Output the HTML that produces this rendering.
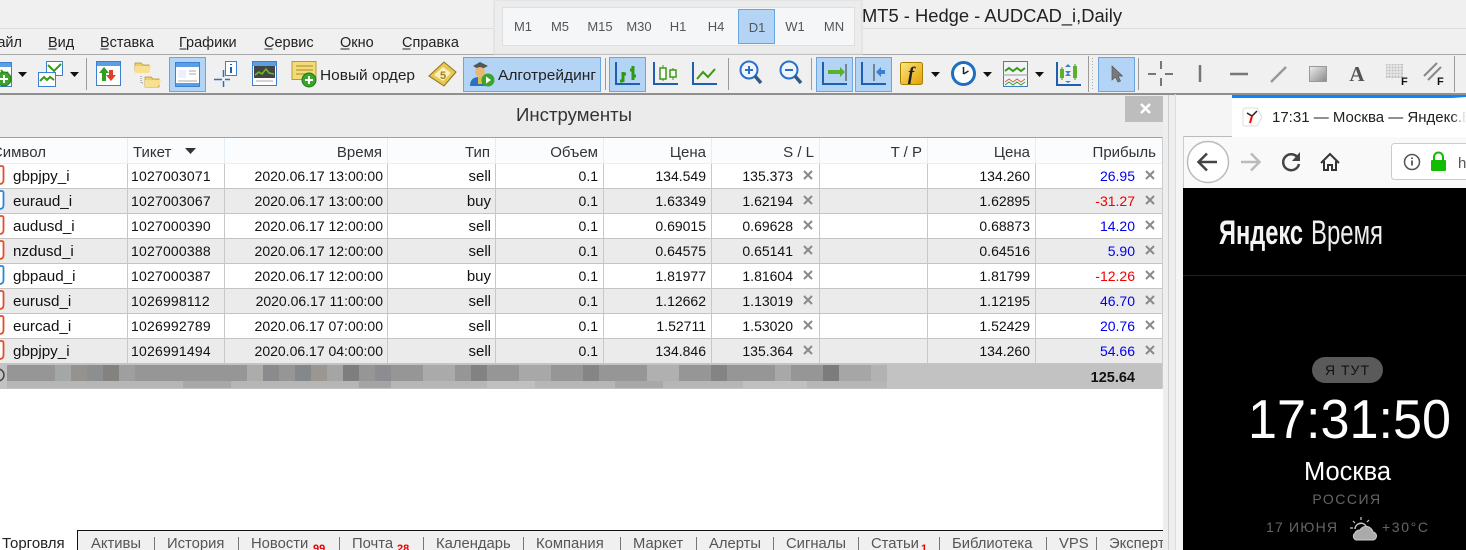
<!DOCTYPE html>
<html><head><meta charset="utf-8"><title>MT5</title>
<style>
html,body{margin:0;padding:0;background:#f0f0f0;overflow:hidden;width:1466px;height:550px}
svg{display:block;font-family:"Liberation Sans",sans-serif;font-size:14px;fill:#111}
.r{text-anchor:end}.c{text-anchor:middle}
.h{fill:#333;font-size:15px}.b{fill:#0000ee}.d{fill:#f00000}
.s{font-size:15.200px}.k{letter-spacing:.2px}.ty{font-size:15px}
.x{stroke:#8a8a8a;stroke-width:2;fill:none}
.sep{stroke:#9a9a9a;stroke-width:1}
.btn{fill:#b3d4f5;stroke:#6aa5e0}
.ax{stroke:#1f5fb0;stroke-width:2;fill:none}
.gr{stroke:#3a9a10;stroke-width:2;fill:none}
.t{fill:#555;font-size:14.800px}
.tsep{stroke:#777}
.m{font-size:14.500px;fill:#222}
</style></head><body>
<svg width="1466" height="550" viewBox="0 0 1466 550" xmlns="http://www.w3.org/2000/svg">
<defs>
<clipPath id="tabclip"><rect x="0" y="525" width="1163" height="25"/></clipPath>
<clipPath id="brclip"><rect x="1232" y="97" width="234" height="40"/></clipPath>
<linearGradient id="fade" x1="0" x2="1"><stop offset="0" stop-color="#fff" stop-opacity="0"/><stop offset="1" stop-color="#fff"/></linearGradient>
<linearGradient id="gy" x1="0" x2="1" y1="0" y2="1"><stop offset="0" stop-color="#eee"/><stop offset="1" stop-color="#888"/></linearGradient>
<linearGradient id="yl" x1="0" x2="1" y1="0" y2="1"><stop offset="0" stop-color="#ffe680"/><stop offset="1" stop-color="#e0a000"/></linearGradient>
<g id="plus"><circle cx="0" cy="0" r="7" fill="#3aa52a" stroke="#1f7a18"/><path d="M-4 0H4M0-4V4" stroke="#fff" stroke-width="2"/></g>
<g id="win"><rect x="0.500" y="0.500" width="24" height="24" fill="#fff" stroke="#3a7fd0"/><rect x="1" y="1" width="23" height="4" fill="#5a9fe5"/></g>
<path id="arr" d="M0 0H9L4.500 5Z" fill="#111"/>
<g id="cl"><path d="M-4-4L4 4M4-4L-4 4" class="x"/></g>
<g id="oS"><path d="M-6-10h8q1.500 0 1.500 2v12q0 4-4 4h-5.500z" fill="#fff" stroke="#e0502a" stroke-width="1.800"/></g>
<g id="oB"><path d="M-6-10h8q1.500 0 1.500 2v12q0 4-4 4h-5.500z" fill="#fff" stroke="#2a88d8" stroke-width="1.800"/></g>
</defs>

<!-- title bar / menu -->
<rect width="1466" height="550" fill="#f0f0f0"/>
<rect x="0" y="28" width="1466" height="1" fill="#dddddd"/>
<text x="862" y="22" font-size="18" fill="#222" textLength="260" lengthAdjust="spacingAndGlyphs">MT5 - Hedge - AUDCAD_i,Daily</text>

<g class="m">
<text x="22" y="47" class="r">Файл</text>
<text x="48" y="47">Вид</text>
<text x="100" y="47">Вставка</text>
<text x="179" y="47">Графики</text>
<text x="264" y="47">Сервис</text>
<text x="340" y="47">Окно</text>
<text x="402" y="47">Справка</text>
</g>
<path d="M48.500 49h8M100.500 49h8M179.500 49h7M264.500 49h8M340.500 49h9M402.500 49h8" stroke="#222"/>
<rect x="0" y="54" width="1466" height="1" fill="#a8a8a8"/>

<!-- popup timeframe -->
<rect x="494" y="0" width="368" height="54" fill="#ececec" stroke="#dcdcdc"/>
<rect x="502.500" y="7.500" width="352" height="38" fill="#f5f6f7" stroke="#dedede"/>
<rect x="738.500" y="9.500" width="36" height="34" class="btn"/>
<g font-size="13" fill="#555" class="c">
<text x="523" y="31">M1</text><text x="560" y="31">M5</text><text x="600" y="31">M15</text><text x="639" y="31">M30</text><text x="678" y="31">H1</text><text x="716" y="31">H4</text><text x="757" y="32">D1</text><text x="795" y="31">W1</text><text x="834" y="31">MN</text>
</g>

<!-- toolbar -->
<rect x="0" y="93" width="1466" height="2" fill="#8f8f8f"/>
<g transform="translate(-13,62)"><use href="#win"/><path d="M14 8l4 5 3-3" class="gr"/></g>
<use href="#plus" x="4" y="79"/>
<use href="#arr" x="18" y="72"/>
<g transform="translate(38,61)"><rect x="8.500" y="0.500" width="16" height="14" fill="#fff" stroke="#3a7fd0"/><path d="M10 4l6 6 7-7" class="gr" stroke-width="1.500"/><rect x="0.500" y="11.500" width="17" height="14" fill="#fff" stroke="#3a7fd0"/><path d="M2 20l4-4 3 3 3-3 4 3" class="gr" stroke-width="1.500"/></g>
<use href="#arr" x="70" y="72"/>
<line x1="86.500" y1="58" x2="86.500" y2="90" class="sep"/>
<g transform="translate(96,61)"><use href="#win"/><path d="M8 6l-5 6h3v8h4v-8h3z" fill="#2ea01e"/><path d="M15 20l5-6h-3V9h-4v5h-3z" fill="#e0402a"/></g>
<g transform="translate(135,61)"><path d="M0 2h6l2 2h6v6H0z" fill="#f2d060" stroke="#b09030" stroke-width=".7"/><path d="M0 5h16l-2 7H0z" fill="#f7e090"/><path d="M10 16h6l2 2h6v8H10z" fill="#f2d060" stroke="#b09030" stroke-width=".7"/><path d="M10 19h16l-3 7H10z" fill="#f7e090"/><path d="M6 15v7h3" stroke="#888" stroke-dasharray="1 1" fill="none"/></g>
<rect x="169.500" y="57.500" width="36" height="34" class="btn"/>
<g transform="translate(175,62)"><use href="#win"/><rect x="3" y="8" width="8" height="8" fill="#eef"/><path d="M14 9h7M14 12h7M3 19h19" stroke="#aaa"/><rect x="1" y="21" width="23" height="3" fill="#5a9fe5"/></g>
<g transform="translate(214,61)"><rect x="11.500" y="0.500" width="11" height="14" fill="#fff" stroke="#3a7fd0"/><path d="M17 3v1M17 6v6" stroke="#1a5fb0" stroke-width="2"/><path d="M0 18.500h8M11 18.500h5M9.500 9v7M9.500 20v6" stroke="#2a6fc8" stroke-width="1.500"/></g>
<g transform="translate(252,61)"><rect x="0.500" y="0.500" width="24" height="24" fill="#fff" stroke="#3a7fd0"/><rect x="1" y="1" width="23" height="4" fill="#5a9fe5"/><rect x="2" y="5" width="21" height="12" fill="#444"/><path d="M3 14l4-3 3 2 4-5 3 4 5 1" stroke="#6ac020" stroke-width="1.500" fill="none"/><path d="M4 20h17" stroke="#aaa"/></g>
<g transform="translate(291,61)"><rect x="1" y="0.500" width="24" height="18" fill="#f3dc78" stroke="#b89a30"/><path d="M5 5h17M5 9h17M5 13h14" stroke="#a08828"/><use href="#plus" x="18" y="19"/></g>
<text x="320" y="80" font-size="15" fill="#222" textLength="95" lengthAdjust="spacingAndGlyphs">Новый ордер</text>
<g transform="translate(429,61)"><path d="M0 15L15 1l12 10-12 14z" fill="#e8c850" stroke="#8a7020"/><path d="M5 14l9-8 8 6-8 8z" fill="#f8f0c0"/><text x="11" y="18" font-size="11" font-weight="bold" fill="#a08020">5</text></g>
<rect x="463.500" y="57.500" width="137" height="34" class="btn"/>
<g transform="translate(469,61)"><path d="M4 5L11 1l8 4-8 4z" fill="#555"/><circle cx="11" cy="11" r="5" fill="#e8b870"/><path d="M1 25q0-9 9-9t7 9z" fill="#2a6fc8"/><rect x="9" y="16" width="4" height="7" fill="#e0c030"/><circle cx="19" cy="19" r="6.500" fill="#3aa52a"/><path d="M17 15.500l5 3.500-5 3.500z" fill="#fff"/></g>
<text x="498" y="80" font-size="14.500" fill="#222" textLength="98" lengthAdjust="spacingAndGlyphs">Алготрейдинг</text>
<line x1="605.500" y1="58" x2="605.500" y2="90" class="sep"/>
<rect x="609.500" y="57.500" width="36" height="34" class="btn"/>
<g transform="translate(615,61)"><path d="M1 1v22h24" class="ax"/><path d="M8 11v10M5 20h3M8 13h3M18 5v14M15 9h3M18 15h3" stroke="#2e9a10" stroke-width="3" fill="none"/></g>
<g transform="translate(653,61)"><path d="M1 1v22h24" class="ax"/><path d="M10 4v16M20 7v12" stroke="#3a9a10"/><rect x="7" y="7" width="6" height="11" fill="#fff" stroke="#3a9a10" stroke-width="1.500"/><rect x="17" y="9" width="6" height="7" fill="#fff" stroke="#3a9a10" stroke-width="1.500"/></g>
<g transform="translate(692,61)"><path d="M1 1v22h24" class="ax"/><path d="M5 18l6-7 5 5 7-8" class="gr"/></g>
<line x1="728.500" y1="58" x2="728.500" y2="90" class="sep"/>
<g transform="translate(739,60)"><circle cx="10" cy="10" r="8.500" fill="#eef5fd" stroke="#2a6fc8" stroke-width="2"/><path d="M6 10h8M10 6v8" stroke="#2a6fc8" stroke-width="2"/><path d="M16 16l6 7" stroke="#365a80" stroke-width="3.500"/></g>
<g transform="translate(779,60)"><circle cx="10" cy="10" r="8.500" fill="#eef5fd" stroke="#2a6fc8" stroke-width="2"/><path d="M6 10h8" stroke="#2a6fc8" stroke-width="2"/><path d="M16 16l6 7" stroke="#365a80" stroke-width="3.500"/></g>
<line x1="811.500" y1="58" x2="811.500" y2="90" class="sep"/>
<rect x="816.500" y="57.500" width="36" height="34" class="btn"/>
<g transform="translate(822,61)"><path d="M1 1v22h24" class="ax"/><path d="M24 3v17" stroke="#333"/><path d="M6 9h12v-3l5 5-5 5v-3H6z" fill="#5ab030"/></g>
<rect x="855.500" y="57.500" width="36" height="34" class="btn"/>
<g transform="translate(861,61)"><path d="M1 1v22h24" class="ax"/><path d="M13 3v17" stroke="#333"/><path d="M24 9h-4v-3l-5 5 5 5v-3h4z" fill="#3a80d0"/></g>
<rect x="900.500" y="62.500" width="22" height="22" rx="2" fill="url(#yl)" stroke="#a88000"/>
<text x="911" y="80" class="c" font-family="Liberation Serif" font-style="italic" font-weight="bold" font-size="19" fill="#222">f</text>
<use href="#arr" x="931" y="72"/>
<g transform="translate(951,61)"><circle cx="12.500" cy="12.500" r="11" fill="#fff" stroke="#1f6fc0" stroke-width="3"/><path d="M12.500 13V6M12.500 13l5-3" stroke="#222" stroke-width="1.500"/></g>
<use href="#arr" x="983" y="72"/>
<g transform="translate(1003,61)"><rect x="0.500" y="0.500" width="24" height="25" fill="#f0f4f8" stroke="#3a7fd0"/><path d="M2 10l4-3 4 3 4-3 4 3 4-3" class="gr" stroke-width="1.500"/><path d="M0 14h25" stroke="#999"/><path d="M2 21l4-3 4 3 4-3 4 3 4-3" stroke="#e06040" fill="none"/><path d="M2 24l4-3 4 3 4-3 4 3 4-3" stroke="#40a020" fill="none"/></g>
<use href="#arr" x="1035" y="72"/>
<g transform="translate(1055,61)"><path d="M2 1v23h24" class="ax"/><path d="M7 6v13M20 3v16" stroke="#3a9a10"/><rect x="5" y="8" width="4" height="9" fill="#5ab030"/><rect x="18" y="5" width="4" height="12" fill="#5ab030"/><path d="M16 6h-6l3-3zM16 10h-6l3 3z M10 15h6l-3-3zM10 20h6l-3 2z" fill="#3a80d0"/></g>
<line x1="1088.500" y1="56" x2="1088.500" y2="92" class="sep"/>
<line x1="1092.500" y1="58" x2="1092.500" y2="90" stroke="#aaa" stroke-dasharray="1 2"/>
<rect x="1098.500" y="57.500" width="36" height="34" class="btn"/>
<path d="M1112 66v14l3.500-3 2.500 5 2.500-1-2.500-5h4.500z" fill="#7a7a7a" stroke="#555" stroke-width=".7"/>
<line x1="1138.500" y1="58" x2="1138.500" y2="90" class="sep"/>
<path d="M1148 74h8M1165 74h8M1161 61v8M1161 78v8" stroke="#777" stroke-width="2"/>
<path d="M1200 65v17" stroke="#777" stroke-width="2.500"/>
<path d="M1230 74h18" stroke="#777" stroke-width="2.500"/>
<path d="M1271 82l15-15" stroke="#999" stroke-width="2.500"/>
<rect x="1309.500" y="66.500" width="17" height="15" fill="url(#gy)" stroke="#999"/>
<text x="1357" y="81" class="c" font-family="Liberation Serif" font-weight="bold" font-size="21" fill="#555">A</text>
<rect x="1386" y="64" width="17" height="14" fill="#aaa" opacity=".7"/>
<path d="M1386 66h17M1386 69h17M1386 72h17M1386 75h17M1388 64v14M1391 64v14M1394 64v14M1397 64v14M1400 64v14" stroke="#f0f0f0"/>
<text x="1401" y="85" font-size="11" font-weight="bold" fill="#111">F</text>
<path d="M1424 76l13-13M1428 80l13-13" stroke="#888" stroke-width="2"/>
<text x="1437" y="85" font-size="11" font-weight="bold" fill="#111">F</text>
<line x1="1454.500" y1="56" x2="1454.500" y2="92" class="sep"/>

<!-- Panel -->
<rect x="0" y="95" width="1175" height="455" fill="#ebebeb"/>
<text x="516" y="121" font-size="18.500" fill="#333" textLength="116" lengthAdjust="spacingAndGlyphs">Инструменты</text>
<rect x="1125" y="96" width="41" height="26" fill="#bdbdbd"/>
<path d="M1141 104l9 9M1150 104l-9 9" stroke="#fff" stroke-width="2.500"/>

<rect x="0" y="137" width="1163" height="413" fill="#fff"/>
<rect x="0" y="137" width="1163" height="1" fill="#a0a0a0"/>
<rect x="0" y="138" width="1162" height="26" fill="#fbfcfe"/>
<rect x="0" y="163" width="1162" height="1" fill="#e8eff6"/>
<rect x="1162" y="137" width="1" height="252" fill="#ccc"/>
<!-- rows background -->
<rect x="0" y="189" width="1162" height="24" fill="#ebebeb"/>
<rect x="0" y="239" width="1162" height="24" fill="#ebebeb"/>
<rect x="0" y="289" width="1162" height="24" fill="#ebebeb"/>
<rect x="0" y="339" width="1162" height="24" fill="#ebebeb"/>
<path d="M0 188.500H1162M0 213.500H1162M0 238.500H1162M0 263.500H1162M0 288.500H1162M0 313.500H1162M0 338.500H1162M0 363.500H1162" stroke="#c4c4c4"/>
<path d="M127.500 164V364M224.500 164V364M387.500 164V364M495.500 164V364M603.500 164V364M711.500 164V364M819.500 164V364M927.500 164V364M1035.500 164V364" stroke="#c8c8c8"/>
<path d="M127.500 138V164M224.500 138V164M387.500 138V164M495.500 138V164M603.500 138V164M711.500 138V164M819.500 138V164M927.500 138V164M1035.500 138V164" stroke="#e4ecf4"/>

<!-- header -->
<g class="h">
<text x="46" y="157" class="r">Символ</text>
<text x="133" y="157">Тикет</text>
<text x="382" y="157" class="r">Время</text>
<text x="490" y="157" class="r">Тип</text>
<text x="598" y="157" class="r">Объем</text>
<text x="706" y="157" class="r">Цена</text>
<text x="814" y="157" class="r">S / L</text>
<text x="922" y="157" class="r">T / P</text>
<text x="1030" y="157" class="r">Цена</text>
<text x="1156" y="157" class="r">Прибыль</text>
</g>
<path d="M185 148h11l-5.500 6z" fill="#333"/>

<!-- rows -->
<g transform="translate(0,181)"><use href="#oS" y="-5"/><text x="13" class="s">gbpjpy_i</text><text x="131" class="k">1027003071</text><text x="383" class="r">2020.06.17 13:00:00</text><text x="491" class="r ty">sell</text><text x="598" class="r">0.1</text><text x="706" class="r">134.549</text><text x="793" class="r">135.373</text><use href="#cl" x="808" y="-6"/><text x="1030" class="r">134.260</text><text x="1135" class="r b">26.95</text><use href="#cl" x="1150" y="-6"/></g>
<g transform="translate(0,206)"><use href="#oB" y="-5"/><text x="13" class="s">euraud_i</text><text x="131" class="k">1027003067</text><text x="383" class="r">2020.06.17 13:00:00</text><text x="491" class="r ty">buy</text><text x="598" class="r">0.1</text><text x="706" class="r">1.63349</text><text x="793" class="r">1.62194</text><use href="#cl" x="808" y="-6"/><text x="1030" class="r">1.62895</text><text x="1135" class="r d">-31.27</text><use href="#cl" x="1150" y="-6"/></g>
<g transform="translate(0,231)"><use href="#oS" y="-5"/><text x="13" class="s">audusd_i</text><text x="131" class="k">1027000390</text><text x="383" class="r">2020.06.17 12:00:00</text><text x="491" class="r ty">sell</text><text x="598" class="r">0.1</text><text x="706" class="r">0.69015</text><text x="793" class="r">0.69628</text><use href="#cl" x="808" y="-6"/><text x="1030" class="r">0.68873</text><text x="1135" class="r b">14.20</text><use href="#cl" x="1150" y="-6"/></g>
<g transform="translate(0,256)"><use href="#oS" y="-5"/><text x="13" class="s">nzdusd_i</text><text x="131" class="k">1027000388</text><text x="383" class="r">2020.06.17 12:00:00</text><text x="491" class="r ty">sell</text><text x="598" class="r">0.1</text><text x="706" class="r">0.64575</text><text x="793" class="r">0.65141</text><use href="#cl" x="808" y="-6"/><text x="1030" class="r">0.64516</text><text x="1135" class="r b">5.90</text><use href="#cl" x="1150" y="-6"/></g>
<g transform="translate(0,281)"><use href="#oB" y="-5"/><text x="13" class="s">gbpaud_i</text><text x="131" class="k">1027000387</text><text x="383" class="r">2020.06.17 12:00:00</text><text x="491" class="r ty">buy</text><text x="598" class="r">0.1</text><text x="706" class="r">1.81977</text><text x="793" class="r">1.81604</text><use href="#cl" x="808" y="-6"/><text x="1030" class="r">1.81799</text><text x="1135" class="r d">-12.26</text><use href="#cl" x="1150" y="-6"/></g>
<g transform="translate(0,306)"><use href="#oS" y="-5"/><text x="13" class="s">eurusd_i</text><text x="131" class="k">1026998112</text><text x="383" class="r">2020.06.17 11:00:00</text><text x="491" class="r ty">sell</text><text x="598" class="r">0.1</text><text x="706" class="r">1.12662</text><text x="793" class="r">1.13019</text><use href="#cl" x="808" y="-6"/><text x="1030" class="r">1.12195</text><text x="1135" class="r b">46.70</text><use href="#cl" x="1150" y="-6"/></g>
<g transform="translate(0,331)"><use href="#oS" y="-5"/><text x="13" class="s">eurcad_i</text><text x="131" class="k">1026992789</text><text x="383" class="r">2020.06.17 07:00:00</text><text x="491" class="r ty">sell</text><text x="598" class="r">0.1</text><text x="706" class="r">1.52711</text><text x="793" class="r">1.53020</text><use href="#cl" x="808" y="-6"/><text x="1030" class="r">1.52429</text><text x="1135" class="r b">20.76</text><use href="#cl" x="1150" y="-6"/></g>
<g transform="translate(0,356)"><use href="#oS" y="-5"/><text x="13" class="s">gbpjpy_i</text><text x="131" class="k">1026991494</text><text x="383" class="r">2020.06.17 04:00:00</text><text x="491" class="r ty">sell</text><text x="598" class="r">0.1</text><text x="706" class="r">134.846</text><text x="793" class="r">135.364</text><use href="#cl" x="808" y="-6"/><text x="1030" class="r">134.260</text><text x="1135" class="r b">54.66</text><use href="#cl" x="1150" y="-6"/></g>

<!-- totals -->
<rect x="0" y="364" width="1162" height="25" fill="#c2c2c2"/>
<circle cx="-2" cy="375" r="6" fill="none" stroke="#444" stroke-width="1.500"/>
<rect x="7" y="365" width="880" height="16" fill="#969696"/>
<rect x="7" y="381" width="880" height="7" fill="#b6b6b6"/>
<g>
<rect x="55" y="365" width="16" height="16" fill="#a3a7a8"/><rect x="71" y="365" width="16" height="16" fill="#96938f"/><rect x="87" y="365" width="16" height="16" fill="#8c8e90"/><rect x="103" y="365" width="16" height="16" fill="#83827e"/><rect x="119" y="365" width="16" height="16" fill="#9f9f9f"/><rect x="247" y="365" width="16" height="16" fill="#acacaa"/><rect x="263" y="365" width="16" height="16" fill="#8b8b8e"/><rect x="295" y="365" width="16" height="16" fill="#85888a"/><rect x="311" y="365" width="16" height="16" fill="#9c9690"/><rect x="327" y="365" width="16" height="16" fill="#a5a5a5"/><rect x="343" y="365" width="16" height="16" fill="#7e7e7e"/><rect x="375" y="365" width="16" height="16" fill="#8b8d90"/>
<rect x="423" y="365" width="32" height="16" fill="#aaaaaa"/><rect x="471" y="365" width="16" height="16" fill="#828282"/><rect x="519" y="365" width="32" height="16" fill="#a8a8a8"/><rect x="583" y="365" width="16" height="16" fill="#858585"/><rect x="647" y="365" width="32" height="16" fill="#b0b0b0"/><rect x="711" y="365" width="16" height="16" fill="#848484"/><rect x="775" y="365" width="16" height="16" fill="#a8a8a8"/><rect x="823" y="365" width="16" height="16" fill="#7c7c7c"/><rect x="839" y="365" width="32" height="16" fill="#a6a6a6"/><rect x="871" y="365" width="16" height="16" fill="#b2b2b2"/>
<rect x="183" y="381" width="48" height="7" fill="#a8a8a8"/><rect x="359" y="381" width="32" height="7" fill="#a4a4a4"/><rect x="487" y="381" width="48" height="7" fill="#c0c0c0"/><rect x="615" y="381" width="48" height="7" fill="#a8a8a8"/><rect x="743" y="381" width="64" height="7" fill="#c0c0c0"/>
</g>
<text x="1135" y="382" class="r" font-weight="bold" font-size="14.500">125.64</text>

<!-- tabs -->
<rect x="0" y="531" width="1163" height="19" fill="#f0f0f0"/>
<rect x="0" y="530" width="78" height="20" fill="#fff"/>
<path d="M77.500 550V530.500H1163" stroke="#111" fill="none"/>
<g clip-path="url(#tabclip)">
<text x="2" y="548" fill="#222" font-size="15">Торговля</text>
<g class="t">
<text x="91" y="548">Активы</text>
<text x="167" y="548">История</text>
<text x="251" y="548">Новости</text>
<text x="352" y="548">Почта</text>
<text x="436" y="548">Календарь</text>
<text x="536" y="548">Компания</text>
<text x="633" y="548">Маркет</text>
<text x="709" y="548">Алерты</text>
<text x="786" y="548">Сигналы</text>
<text x="871" y="548">Статьи</text>
<text x="952" y="548">Библиотека</text>
<text x="1059" y="548">VPS</text>
<text x="1109" y="548">Эксперт</text>
</g>
<g font-size="11" font-weight="bold" fill="#f00000">
<text x="313" y="552">99</text><text x="397" y="552">28</text><text x="921" y="552">1</text>
</g>
<path d="M154.500 537V550M238.500 537V550M339.500 537V550M423.500 537V550M523.500 537V550M620.500 537V550M696.500 537V550M773.500 537V550M858.500 537V550M939.500 537V550M1046.500 537V550M1096.500 537V550" class="tsep"/>
</g>

<!-- gutter between panel and browser -->
<rect x="1163" y="95" width="12" height="455" fill="#eeeeee"/>
<rect x="1168" y="95" width="1" height="455" fill="#cfcfcf"/>

<!-- browser -->
<rect x="1175" y="95" width="291" height="455" fill="#f5f5f5"/>
<rect x="1175" y="94" width="1" height="456" fill="#ddd"/>
<rect x="1232" y="95" width="234" height="42" fill="#fff"/>
<rect x="1232" y="95" width="234" height="3" fill="#0a84ff"/>
<rect x="1183" y="136" width="49" height="1" fill="#bbb"/>
<rect x="1183" y="136" width="1" height="52" fill="#ccc"/>
<rect x="1184" y="137" width="282" height="51" fill="#f9f9fa"/>
<path d="M1245 108h12l5 9-5 9h-12a2 2 0 0 1-2-2v-14a2 2 0 0 1 2-2z" fill="#fff" stroke="#ddd"/>
<path d="M1247 113l5 3 5-5" stroke="#222" stroke-width="1.500" fill="none"/><path d="M1252 116l-2 7" stroke="#f00" stroke-width="2" fill="none"/>
<g clip-path="url(#brclip)"><text x="1272" y="122" font-size="15" fill="#222">17:31 — Москва — Яндекс.Время</text></g>
<rect x="1452" y="97" width="14" height="38" fill="url(#fade)"/>
<circle cx="1208" cy="162" r="20.500" fill="#fff" stroke="#bbb" stroke-width="1.500"/>
<path d="M1199 162h18M1207 153.500l-8.500 8.500 8.500 8.500" stroke="#444" stroke-width="2.500" fill="none"/>
<path d="M1241 162h18M1251 153.500l8.500 8.500-8.500 8.500" stroke="#bbb" stroke-width="2.500" fill="none"/>
<path d="M1298 158a8 8 0 1 0 1 6" stroke="#444" stroke-width="2.500" fill="none"/><path d="M1300 152v9h-8z" fill="#444"/>
<path d="M1321 163l9-9 9 9M1324 161v9h4v-5h4v5h4v-9" stroke="#333" stroke-width="2" fill="none"/>
<rect x="1391.500" y="143.500" width="90" height="36" rx="3" fill="#fff" stroke="#ccc"/>
<circle cx="1412" cy="162" r="7.500" fill="none" stroke="#555" stroke-width="1.500"/><path d="M1412 160.500v5M1412 157.500v1.500" stroke="#555" stroke-width="1.800"/>
<rect x="1431" y="160" width="15" height="11" rx="1" fill="#12bc00"/><path d="M1434 160v-3a4.500 4.500 0 0 1 9 0v3" stroke="#12bc00" stroke-width="2" fill="none"/>
<text x="1458" y="168" font-size="15" fill="#555">h</text>

<!-- yandex black -->
<rect x="1183" y="188" width="283" height="362" fill="#000"/>
<rect x="1183" y="275" width="283" height="1" fill="#222"/>
<text x="1219" y="244" font-size="34" font-weight="bold" fill="#f4f4f4" textLength="84" lengthAdjust="spacingAndGlyphs">Яндекс</text>
<text x="1311" y="244" font-size="34" fill="#eeeeee" textLength="72" lengthAdjust="spacingAndGlyphs">Время</text>
<rect x="1312" y="357" width="71" height="26" rx="13" fill="#5a5a5a"/>
<text x="1347.500" y="375" class="c" font-size="14" fill="#111" letter-spacing="1">Я ТУТ</text>
<text x="1248" y="438" font-size="55" fill="#fff" textLength="203" lengthAdjust="spacingAndGlyphs">17:31:50</text>
<text x="1347.500" y="480" class="c" font-size="25.500" fill="#fff">Москва</text>
<text x="1347" y="504" class="c" font-size="14" fill="#666" letter-spacing="1.500">РОССИЯ</text>
<text x="1266" y="532" font-size="14" fill="#666" textLength="71">17 ИЮНЯ</text>
<text x="1382" y="532" font-size="14" fill="#666" textLength="46">+30°C</text>
<g transform="translate(1349,516)" stroke="#ccc" fill="none"><path d="M6 7l-2-2M12 4V1M18 6l2-2M4 12H1" stroke-width="1.200"/><path d="M6 13a6 6 0 0 1 11-3" stroke-width="1.500"/><path d="M7 24h16a4 4 0 0 0 1-8 7 7 0 0 0-13-2 5 5 0 0 0-5 3 4 4 0 0 0 1 7z" fill="#aaa" stroke="#ccc"/></g>
</svg>
</body></html>
